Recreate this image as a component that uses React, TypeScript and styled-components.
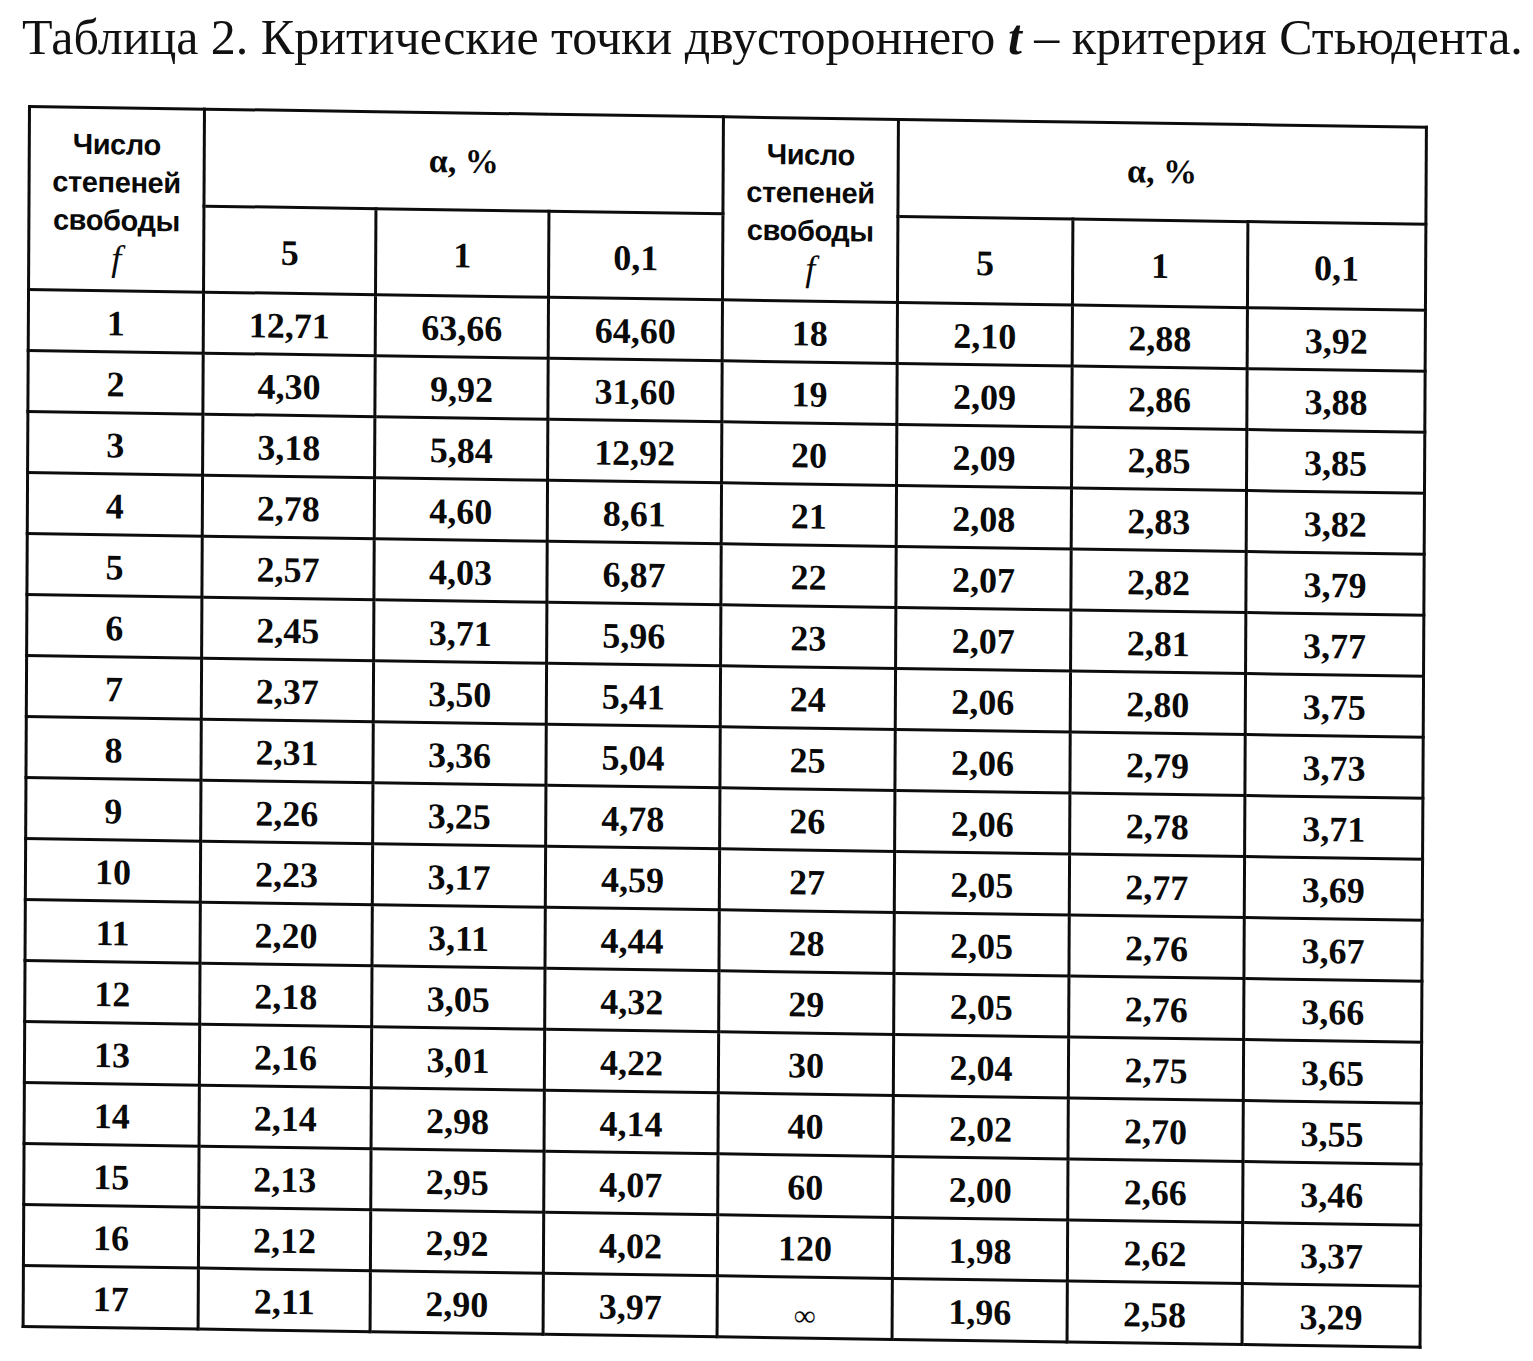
import { createGlobalStyle, styled } from "styled-components";

const GlobalStyle = createGlobalStyle`
  html, body {
    margin: 0;
    padding: 0;
    background: #ffffff;
  }
  body {
    font-family: "Liberation Serif", "Times New Roman", serif;
    color: #0a0a0a;
  }
`;

const Page = styled.div`
  width: 1533px;
  height: 1361px;
  padding: 11px 0 0 22px;
  box-sizing: border-box;
  overflow: hidden;
`;

const Title = styled.h1`
  margin: 0;
  font-family: "Liberation Serif", "Times New Roman", serif;
  font-weight: 400;
  font-size: 50px;
  line-height: 52px;
  white-space: nowrap;
  color: #111;

  i {
    font-weight: 700;
  }
`;

const Sheet = styled.table`
  margin: 42px 0 0 6px;
  border-collapse: collapse;
  table-layout: fixed;
  width: 1397px;
  transform: rotate(0.3deg) skewY(0.55deg);
  transform-origin: top left;

  td,
  th {
    border: 3px solid #0c0c0c;
    padding: 0;
    text-align: center;
    vertical-align: middle;
  }
`;

const DegreesHead = styled.th`
  font-family: "Liberation Sans", Arial, sans-serif;
  font-weight: 700;
  font-size: 29px;
  line-height: 38px;
  letter-spacing: -0.4px;
  padding-top: 6px !important;

  em {
    font-family: "Liberation Serif", serif;
    font-weight: 400;
    font-style: italic;
    font-size: 36px;
  }
`;

const AlphaHead = styled.th<{ $h: number }>`
  height: ${(p) => p.$h}px;
  font-family: "Liberation Serif", serif;
  font-weight: 700;
  font-size: 34px;
`;

const Cell = styled.td<{ $h?: number }>`
  height: ${(p) => p.$h ?? 54}px;
  font-family: "Liberation Serif", serif;
  font-weight: 700;
  font-size: 36px;
  line-height: 1;
  padding-top: 4px !important;
`;

const InfinityMark = styled.span`
  font-size: 30px;
  font-weight: 700;
  position: relative;
  top: 4px;
`;

const widths = [175, 172, 173, 174, 175, 175, 175, 178];

const left: [string, string, string, string][] = [
  ["1", "12,71", "63,66", "64,60"],
  ["2", "4,30", "9,92", "31,60"],
  ["3", "3,18", "5,84", "12,92"],
  ["4", "2,78", "4,60", "8,61"],
  ["5", "2,57", "4,03", "6,87"],
  ["6", "2,45", "3,71", "5,96"],
  ["7", "2,37", "3,50", "5,41"],
  ["8", "2,31", "3,36", "5,04"],
  ["9", "2,26", "3,25", "4,78"],
  ["10", "2,23", "3,17", "4,59"],
  ["11", "2,20", "3,11", "4,44"],
  ["12", "2,18", "3,05", "4,32"],
  ["13", "2,16", "3,01", "4,22"],
  ["14", "2,14", "2,98", "4,14"],
  ["15", "2,13", "2,95", "4,07"],
  ["16", "2,12", "2,92", "4,02"],
  ["17", "2,11", "2,90", "3,97"],
];

const right: [string, string, string, string][] = [
  ["18", "2,10", "2,88", "3,92"],
  ["19", "2,09", "2,86", "3,88"],
  ["20", "2,09", "2,85", "3,85"],
  ["21", "2,08", "2,83", "3,82"],
  ["22", "2,07", "2,82", "3,79"],
  ["23", "2,07", "2,81", "3,77"],
  ["24", "2,06", "2,80", "3,75"],
  ["25", "2,06", "2,79", "3,73"],
  ["26", "2,06", "2,78", "3,71"],
  ["27", "2,05", "2,77", "3,69"],
  ["28", "2,05", "2,76", "3,67"],
  ["29", "2,05", "2,76", "3,66"],
  ["30", "2,04", "2,75", "3,65"],
  ["40", "2,02", "2,70", "3,55"],
  ["60", "2,00", "2,66", "3,46"],
  ["120", "1,98", "2,62", "3,37"],
  ["∞", "1,96", "2,58", "3,29"],
];

const Degrees = () => (
  <DegreesHead rowSpan={2}>
    Число
    <br />
    степеней
    <br />
    свободы
    <br />
    <em>f</em>
  </DegreesHead>
);

export default function App() {
  return (
    <Page>
      <GlobalStyle />
      <Title>
        Таблица 2. Критические точки двустороннего <i>t</i> – критерия Стьюдента.
      </Title>
      <Sheet>
        <colgroup>
          {widths.map((w, i) => (
            <col key={i} style={{ width: w }} />
          ))}
        </colgroup>
        <thead>
          <tr>
            <Degrees />
            <AlphaHead colSpan={3} $h={94}>
              α, %
            </AlphaHead>
            <Degrees />
            <AlphaHead colSpan={3} $h={94}>
              α, %
            </AlphaHead>
          </tr>
          <tr>
            {["5", "1", "0,1", "5", "1", "0,1"].map((v, i) => (
              <Cell as="th" key={i} $h={79}>
                {v}
              </Cell>
            ))}
          </tr>
        </thead>
        <tbody>
          {left.map((row, i) => (
            <tr key={i}>
              {row.map((v, j) => (
                <Cell key={"l" + j}>{v}</Cell>
              ))}
              {right[i].map((v, j) => (
                <Cell key={"r" + j}>
                  {v === "∞" ? <InfinityMark>∞</InfinityMark> : v}
                </Cell>
              ))}
            </tr>
          ))}
        </tbody>
      </Sheet>
    </Page>
  );
}
